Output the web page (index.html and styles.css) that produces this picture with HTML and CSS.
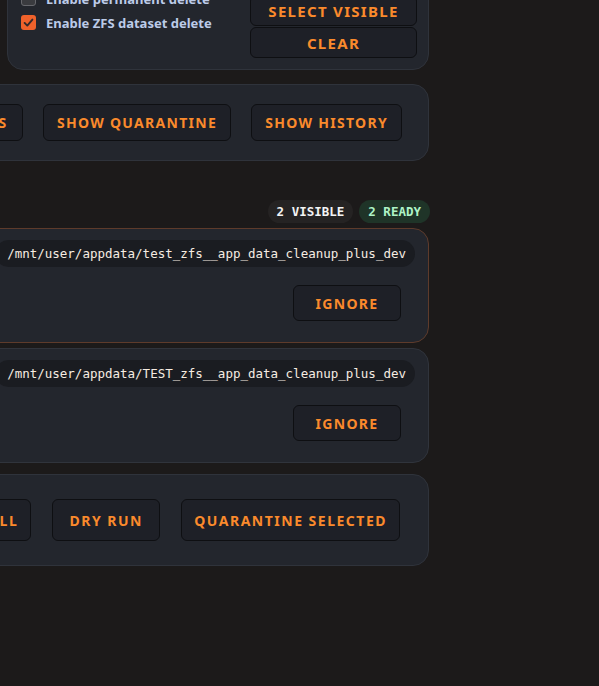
FILE: index.html
```html
<!doctype html>
<html lang="en">
<head>
  <meta charset="utf-8">
  <title>Appdata Cleanup</title>
  <link rel="stylesheet" href="styles.css">
</head>
<body>
  <main class="page">
    <!-- TOP ROW: scan filters + delete options -->
    <div class="top-row">
      <section class="panel filters">
        <span class="field-label">Filter</span>
      </section>

      <section class="panel options">
        <div class="checks">
          <label class="check"><span class="box"></span>Enable permanent delete</label>
          <label class="check">
            <span class="box is-on">
              <svg width="15" height="15" viewBox="0 0 15 15"><path d="M3.6 7.9l2.7 2.7 5.1-6" fill="none" stroke="#34292a" stroke-width="1.9" stroke-linecap="round" stroke-linejoin="round"/></svg>
            </span>
            Enable ZFS dataset delete
          </label>
        </div>
        <div class="stack">
          <button class="btn btn-sm">Select all</button>
          <button class="btn btn-sm">Select visible</button>
          <button class="btn btn-sm">Clear</button>
        </div>
      </section>
    </div>

    <!-- VIEW ACTIONS -->
    <section class="panel actions">
      <button class="btn">Scan</button>
      <button class="btn">Settings</button>
      <button class="btn">Show quarantine</button>
      <button class="btn">Show history</button>
    </section>

    <!-- CANDIDATE LIST -->
    <div class="list-head">
      <h2 class="list-title">Candidates</h2>
      <div class="badges">
        <span class="badge badge-count">2 visible</span>
        <span class="badge badge-ready">2 ready</span>
      </div>
    </div>

    <article class="card is-ready">
      <div class="card-top">
        <code class="path">/mnt/user/appdata/test_zfs__app_data_cleanup_plus_dev</code>
      </div>
      <div class="card-actions">
        <button class="btn">Ignore</button>
      </div>
    </article>

    <article class="card">
      <div class="card-top">
        <code class="path">/mnt/user/appdata/TEST_zfs__app_data_cleanup_plus_dev</code>
      </div>
      <div class="card-actions">
        <button class="btn">Ignore</button>
      </div>
    </article>

    <!-- BULK ACTIONS -->
    <section class="panel bottom-actions">
      <button class="btn btn-lg">Select all</button>
      <button class="btn btn-lg">Dry run</button>
      <button class="btn btn-lg">Quarantine selected</button>
    </section>
  </main>
</body>
</html>
```

FILE: styles.css
```css
/*----------------------------------------------
 * BASE
 *----------------------------------------------*/
html, body {
  margin: 0;
  padding: 0;
}

body {
  background: #1c1a1a;
  font-family: "Noto Sans", sans-serif;
  overflow: hidden;
}

/* The page column is wider than the window and scrolled to the left */
.page {
  width: 700px;
  margin: -50px 0 0 -271px;
}

/*----------------------------------------------
 * PANELS
 *----------------------------------------------*/
.panel {
  background: #23262d;
  border: 1px solid #2f333b;
  border-radius: 16px;
  box-sizing: border-box;
}

.top-row {
  display: grid;
  grid-template-columns: 1fr 422px;
  gap: 16px;
}

.filters {
  padding: 12px;
  color: #b7c7e3;
  font-size: 13px;
}

.options {
  display: flex;
  justify-content: space-between;
  align-items: center;
  padding: 12px 11px 11px 13px;
}

.checks {
  display: flex;
  flex-direction: column;
  gap: 4px;
}

.check {
  display: flex;
  align-items: center;
  gap: 10px;
  height: 20px;
  font-size: 13px;
  font-weight: 700;
  color: #bccbe8;
}

.box {
  width: 15px;
  height: 15px;
  box-sizing: border-box;
  border-radius: 3px;
  background: #3a3b3f;
  border: 1px solid #66676c;
  display: flex;
  align-items: center;
  justify-content: center;
}

.box.is-on {
  background: #f0622b;
  border: none;
}

.stack {
  display: flex;
  flex-direction: column;
  gap: 1px;
  width: 167px;
}

/*----------------------------------------------
 * BUTTONS
 *----------------------------------------------*/
.btn {
  font-family: "Noto Sans", sans-serif;
  font-weight: 700;
  font-size: 14px;
  letter-spacing: 1.3px;
  text-transform: uppercase;
  color: #fa8a2c;
  background: #1e2027;
  border: 1px solid #0e0f12;
  border-radius: 6px;
  height: 37px;
  min-width: 108px;
  padding: 0 13px;
  white-space: nowrap;
  cursor: pointer;
}

.btn-sm {
  height: 31px;
  width: 100%;
  font-size: 15px;
}

.btn-lg {
  height: 42px;
  padding: 0 12px;
  letter-spacing: 1.5px;
}

.actions {
  margin-top: 14px;
  display: flex;
  justify-content: flex-end;
  gap: 20px;
  padding: 19px 26px;
}

.bottom-actions {
  margin-top: 11px;
  display: flex;
  justify-content: flex-end;
  gap: 21px;
  padding: 24px 28px;
}

/*----------------------------------------------
 * CANDIDATE LIST
 *----------------------------------------------*/
.list-head {
  margin-top: 39px;
  height: 23px;
  display: flex;
  justify-content: space-between;
  align-items: center;
}

.list-title {
  margin: 0;
  font-size: 15px;
  color: #e6e6e6;
}

.badges {
  display: flex;
  gap: 6px;
  margin-right: -1px;
}

.badge {
  height: 23px;
  padding: 0 9px;
  border-radius: 12px;
  display: flex;
  align-items: center;
  font: 700 12.5px "DejaVu Sans Mono", monospace;
  text-transform: uppercase;
}

.badge-count {
  background: #252323;
  color: #f4f4f4;
}

.badge-ready {
  background: #1f3428;
  color: #aef3c6;
}

.card {
  margin-top: 5px;
  background: #23262d;
  border: 1px solid #30343c;
  border-radius: 16px;
  padding: 11px 13px 21px;
}

.card.is-ready {
  border-color: #5e3b2b;
}

.card-top {
  display: flex;
  justify-content: flex-end;
}

.path {
  display: flex;
  align-items: center;
  height: 27px;
  padding: 0 9px 0 12px;
  border-radius: 14px;
  background: #1a1c21;
  color: #f6ece2;
  font: 12.5px "DejaVu Sans Mono", monospace;
  white-space: nowrap;
}

.card-actions {
  display: flex;
  justify-content: flex-end;
  margin-top: 18px;
  padding-right: 14px;
}

.card-actions .btn {
  height: 36px;
}
```
